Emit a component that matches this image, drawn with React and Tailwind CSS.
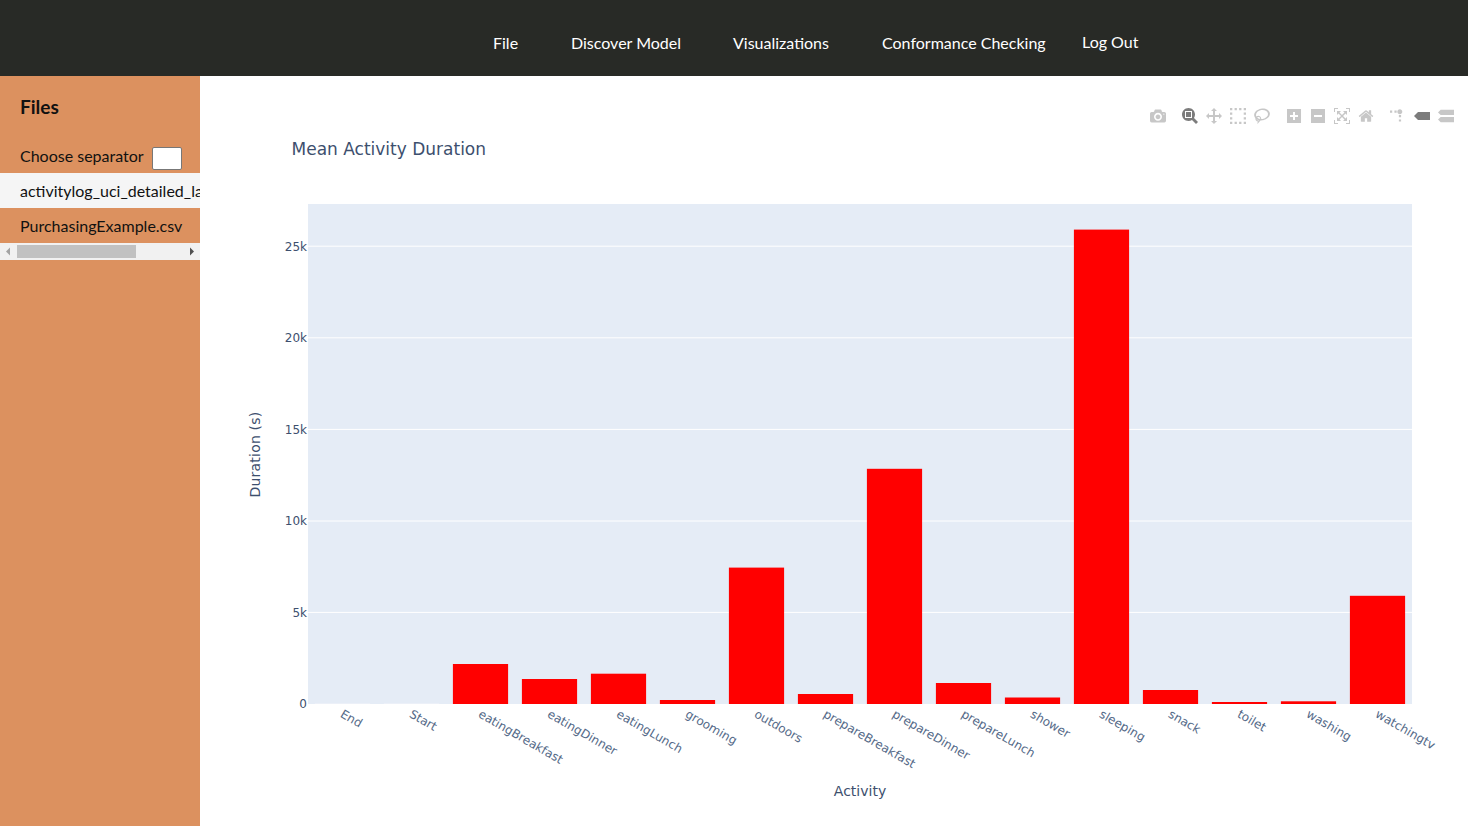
const bars = [
  ["End", 703.6], ["Start", 703.6], ["eatingBreakfast", 664], ["eatingDinner", 679], ["eatingLunch", 673.7],
  ["grooming", 700], ["outdoors", 567.6], ["prepareBreakfast", 694], ["prepareDinner", 468.8], ["prepareLunch", 683],
  ["shower", 697.5], ["sleeping", 229.6], ["snack", 690], ["toilet", 702], ["washing", 701.3], ["watchingtv", 595.8],
];
const ticks = [["25k", 246.2], ["20k", 337.8], ["15k", 429.4], ["10k", 521], ["5k", 612.4]];
const FLIP = "matrix(1 0 0 -1 0 850)";
const icons = [
  [
    { w: 1000, h: 1000, d: "m500 450c-83 0-150-67-150-150 0-83 67-150 150-150 83 0 150 67 150 150 0 83-67 150-150 150z m400 150h-120c-16 0-34 13-39 29l-31 93c-6 15-23 28-40 28h-340c-16 0-34-13-39-28l-31-94c-6-15-23-28-40-28h-120c-55 0-100-45-100-100v-450c0-55 45-100 100-100h800c55 0 100 45 100 100v450c0 55-45 100-100 100z m-400-550c-138 0-250 112-250 250 0 138 112 250 250 250 138 0 250-112 250-250 0-138-112-250-250-250z m365 380c-19 0-35 16-35 35 0 19 16 35 35 35 19 0 35-16 35-35 0-19-16-35-35-35z" },
  ],
  [
    { w: 1000, h: 1000, active: true, d: "m1000-25l-250 251c40 63 63 138 63 218 0 224-182 406-407 406-224 0-406-182-406-406s183-406 407-406c80 0 155 22 218 62l250-250 125 125z m-812 250l0 438 437 0 0-438-437 0z m62 375l313 0 0-312-313 0 0 312z" },
    { w: 1000, h: 1000, d: "m1000 350l-187 188 0-125-250 0 0 250 125 0-188 187-187-187 125 0 0-250-250 0 0 125-188-188 186-187 0 125 252 0 0-250-125 0 187-188 188 188-125 0 0 250 250 0 0-126 187 188z" },
    { w: 1000, h: 1000, t: "matrix(1 0 0 1 0 0)", d: "M0 0h143v143h-143z M286 0h143v143h-143z M571 0h143v143h-143z M857 0h143v143h-143z M0 286h143v143h-143z M857 286h143v143h-143z M0 571h143v143h-143z M857 571h143v143h-143z M0 857h143v143h-143z M286 857h143v143h-143z M571 857h143v143h-143z M857 857h143v143h-143z" },
    { w: 1031, h: 1000, d: "m1018 538c-36 207-290 336-568 286-277-48-473-256-436-463 10-57 36-108 76-151-13-66 11-137 68-183 34-28 75-41 114-42l-55-70 0 0c-2-1-3-2-4-3-10-14-8-34 5-45 14-11 34-8 45 4 1 1 2 3 2 5l0 0 113 140c16 11 31 24 45 40 4 3 6 7 8 11 48-3 100 0 151 9 278 48 473 255 436 462z m-624-379c-80 14-149 48-197 96 42 42 109 47 156 9 33-26 47-66 41-105z m-187-74c-19 16-33 37-39 60 50-32 109-55 174-68-42-25-95-24-135 8z m360 75c-34-7-69-9-102-8 8 62-16 128-68 170-73 59-175 54-244-5-9 20-16 40-20 61-28 159 121 317 333 354s407-60 434-217c28-159-121-318-333-355z" },
  ],
  [
    { w: 875, h: 1000, d: "m1 787l0-875 875 0 0 875-875 0z m687-500l-187 0 0-187-125 0 0 187-188 0 0 125 188 0 0 187 125 0 0-187 187 0 0-125z" },
    { w: 875, h: 1000, d: "m0 788l0-876 875 0 0 876-875 0z m688-500l-500 0 0 125 500 0 0-125z" },
    { w: 1000, h: 1000, d: "m250 850l-187 0-63 0 0-62 0-188 63 0 0 188 187 0 0 62z m688 0l-188 0 0-62 188 0 0-188 62 0 0 188 0 62-62 0z m-875-938l0 188-63 0 0-188 0-62 63 0 187 0 0 62-187 0z m875 188l0-188-188 0 0-62 188 0 62 0 0 62 0 188-62 0z m-125 188l-1 0-93-94-156 156 156 156 92-93 2 0 0 250-250 0 0-2 93-92-156-156-156 156 94 92 0 2-250 0 0-250 0 0 93 93 157-156-157-156-93 94 0 0 0-250 250 0 0 0-94 93 156 157 156-157-93-93 0 0 250 0 0 250z" },
    { w: 928.6, h: 1000, d: "m786 296v-267q0-15-11-26t-25-10h-214v214h-143v-214h-214q-15 0-25 10t-11 26v267q0 1 0 2t0 2l321 264 321-264q1-1 1-4z m124 39l-34-41q-5-5-12-6h-2q-7 0-12 3l-386 322-386-322q-7-4-13-4-7 2-12 7l-35 41q-4 5-3 13t6 12l401 334q18 15 42 15t43-15l136-114v109q0 8 5 13t13 5h107q8 0 13-5t5-13v-227l122-102q5-5 6-12t-4-13z" },
  ],
  [
    { w: 1000, h: 1000, t: "matrix(1.5 0 0 -1.5 0 850)", d: "M512 409c0-57-46-104-103-104-57 0-104 47-104 104 0 57 47 103 104 103 57 0 103-46 103-103z m-327-39l92 0 0 92-92 0z m-185 0l92 0 0 92-92 0z m370-186l92 0 0 93-92 0z m0-184l92 0 0 92-92 0z" },
    { w: 1500, h: 1000, active: true, d: "m375 725l0 0-375-375 375-374 0-1 1125 0 0 750-1125 0z" },
    { w: 1125, h: 1000, d: "m187 786l0 2-187-188 188-187 0 0 937 0 0 373-938 0z m0-499l0 1-187-188 188-188 0 0 937 0 0 375-938 0z" },
  ],
];

function ModeIcon({ w, h, d, t, active }) {
  return (
    <span className="flex h-[22px] w-[24px] items-center justify-center">
      <svg viewBox={`0 0 ${w} ${h}`} className="h-4 w-4">
        <path d={d} transform={t || FLIP} fill={active ? "rgba(68,68,68,0.7)" : "rgba(68,68,68,0.3)"} />
      </svg>
    </span>
  );
}

export default function App() {
  return (
    <div className="flex h-screen flex-col overflow-hidden bg-white font-['Lato',sans-serif] text-[16px]">
      <header className="flex h-[76px] shrink-0 items-center bg-[#282a26] pl-[493px] pt-[10px] text-white">
        <span className="w-[78px] leading-[24px]">File</span>
        <span className="w-[162px] leading-[24px]">Discover Model</span>
        <span className="w-[149px] leading-[24px]">Visualizations</span>
        <span className="w-[200px] leading-[24px]">Conformance Checking</span>
        <span className="mb-[2px] leading-[24px]">Log Out</span>
      </header>
      <div className="flex min-h-0 flex-1">
        <aside className="w-[200px] shrink-0 bg-[#dc915f] text-[#111]">
          <h2 className="px-5 pt-[18px] text-[19px] font-bold leading-[26px]">Files</h2>
          <div className="mt-[23px] flex h-[26px] items-center pl-5">
            <span>Choose separator</span>
            <span className="ml-2 mt-[4px] h-[23px] w-[30px] rounded-[2px] border border-[#777] bg-white" />
          </div>
          <div className="mt-[4px] overflow-hidden">
            <div className="h-[35px] overflow-hidden whitespace-nowrap bg-[#f5f5f5] pl-5 leading-[35px]">activitylog_uci_detailed_labour.xes</div>
            <div className="h-[35px] overflow-hidden whitespace-nowrap pl-5 leading-[35px]">PurchasingExample.csv</div>
            <div className="flex h-[17px] items-center bg-[#f1f1f1]">
              <svg viewBox="0 0 17 17" className="h-[17px] w-[17px] shrink-0"><path d="M10 4.5v8l-4-4z" fill="#a3a3a3" /></svg>
              <span className="h-[13px] w-[119px] bg-[#c1c1c1]" />
              <span className="flex-1" />
              <svg viewBox="0 0 17 17" className="h-[17px] w-[17px] shrink-0"><path d="M7 4.5v8l4-4z" fill="#505050" /></svg>
            </div>
          </div>
        </aside>
        <main className="relative min-w-0 flex-1">
          <svg viewBox="200 76 1268 750" className="block h-[750px] w-[1268px] font-['DejaVu_Sans',sans-serif]">
            <text x="291.5" y="154.5" fontSize="17" fill="#3d4f6e">Mean Activity Duration</text>
            <rect x="308" y="204" width="1104" height="500" fill="#e5ecf6" />
            {ticks.map(([l, y]) => (
              <g key={l}>
                <line x1="308" x2="1412" y1={y} y2={y} stroke="#fff" strokeWidth="1" />
                <text x="307" y={y + 4.4} textAnchor="end" fontSize="12" fill="#3d4f6e">{l}</text>
              </g>
            ))}
            <text x="307" y="708" textAnchor="end" fontSize="12" fill="#3d4f6e">0</text>
            {bars.map(([l, top], i) => {
              const cx = 342.5 + i * 69;
              return (
                <g key={l}>
                  <rect x={cx - 27.6} y={top} width="55.2" height={704 - top} fill={top > 703.5 ? "#f6f8fc" : "#ff0000"} />
                  <text x={cx - 3} y="716.5" fontSize="12" fill="#556a88" transform={`rotate(30 ${cx - 3} 716.5)`}>{l}</text>
                </g>
              );
            })}
            <text x="860" y="796" textAnchor="middle" fontSize="14" fill="#3d4f6e">Activity</text>
            <text x="260" y="454.5" textAnchor="middle" fontSize="14" letterSpacing="0.2" fill="#3d4f6e" transform="rotate(-90 260 454.5)">Duration (s)</text>
          </svg>
          <div className="absolute right-[10px] top-[29px] flex gap-2">
            {icons.map((g, i) => (
              <div key={i} className="flex">
                {g.map((ic, j) => <ModeIcon key={j} {...ic} />)}
              </div>
            ))}
          </div>
        </main>
      </div>
    </div>
  );
}
